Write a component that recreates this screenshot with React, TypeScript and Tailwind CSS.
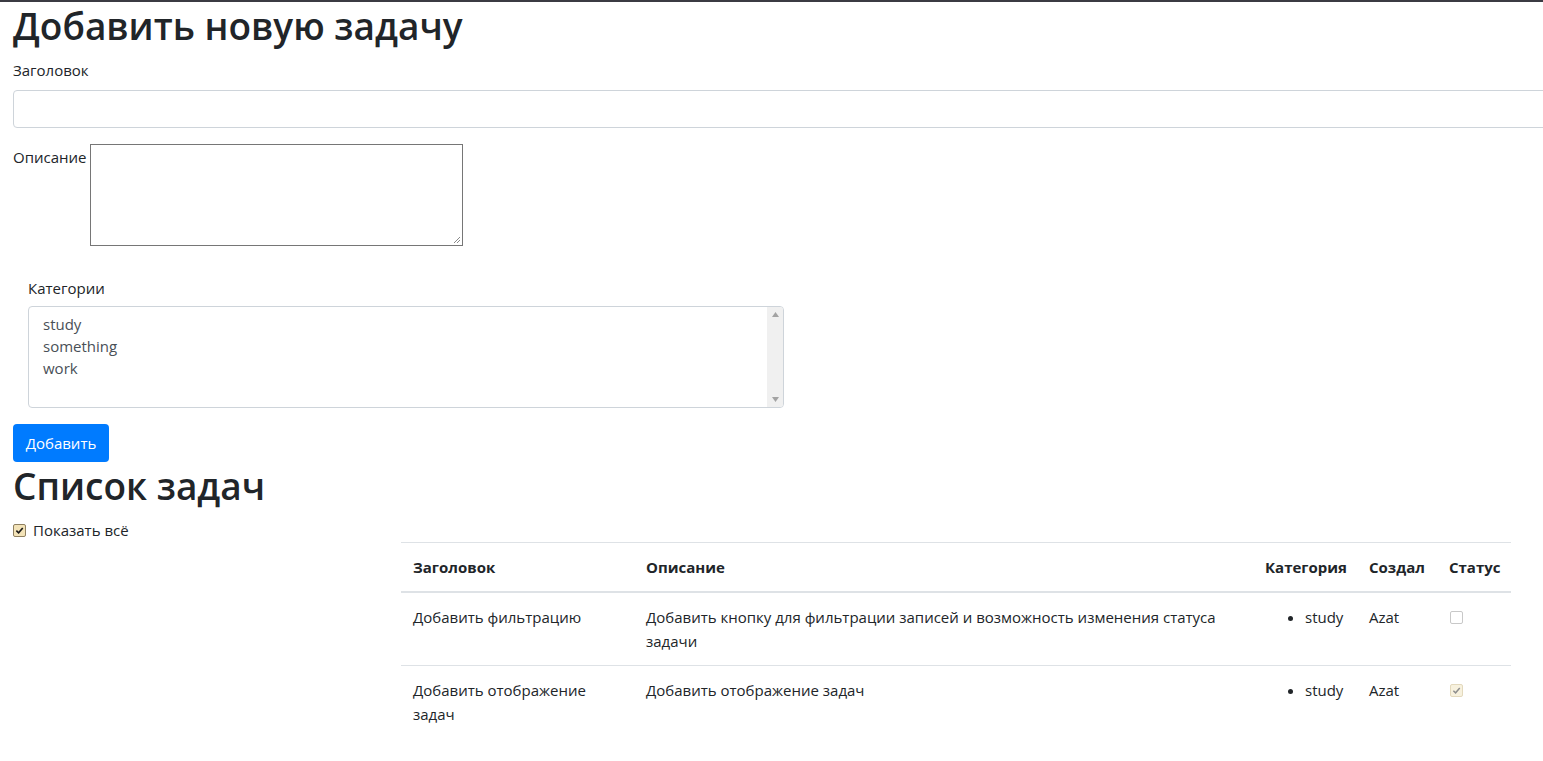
import React from "react";

const font = { fontFamily: '"Open Sans", "Noto Sans", sans-serif' };

function Check({ checked, disabled }: { checked: boolean; disabled?: boolean }) {
  if (disabled) {
    return (
      <span
        className={
          "inline-flex h-[13px] w-[13px] items-center justify-center rounded-[2px] border " +
          (checked ? "border-[#e3d9bd] bg-[#f7f1de]" : "border-[#c8c8c8] bg-white")
        }
      >
        {checked && (
          <svg width="9" height="9" viewBox="0 0 10 10">
            <path d="M1.5 5.2 L4 7.6 L8.6 2.2" fill="none" stroke="#8e8e8e" strokeWidth="1.6" />
          </svg>
        )}
      </span>
    );
  }
  return (
    <span className="inline-flex h-[13px] w-[13px] items-center justify-center rounded-[2px] border border-[#8f8060] bg-[#f3e3b8]">
      {checked && (
        <svg width="9" height="9" viewBox="0 0 10 10">
          <path d="M1.5 5.2 L4 7.6 L8.6 2.2" fill="none" stroke="#1a1a1a" strokeWidth="1.8" />
        </svg>
      )}
    </span>
  );
}

const rows = [
  {
    title: "Добавить фильтрацию",
    desc: "Добавить кнопку для фильтрации записей и возможность изменения статуса задачи",
    cat: "study",
    author: "Azat",
    done: false,
  },
  {
    title: "Добавить отображение задач",
    desc: "Добавить отображение задач",
    cat: "study",
    author: "Azat",
    done: true,
  },
];

export default function App() {
  return (
    <div style={font} className="min-h-[761px] w-[1543px] overflow-hidden bg-white text-[15px] leading-[24px] text-[#212529]">
      <div className="h-[2px] w-full bg-[#3b3b43]" />
      <div className="pl-[13px]">
        <h1 className="mb-[8px] h-[48px] text-[37px] font-semibold leading-[48px]">Добавить новую задачу</h1>
        <div className="mb-[16px]">
          <label className="mb-[8px] block">Заголовок</label>
          <div className="h-[38px] w-[1560px] rounded-[4px] border border-[#ced4da] bg-white" />
        </div>
        <div className="flex items-start">
          <span className="mr-[4px] mt-[1px]">Описание</span>
          <div className="relative h-[102px] w-[373px] border border-[#767676] bg-white">
            <svg className="absolute bottom-[1px] right-[1px]" width="8" height="8" viewBox="0 0 8 8">
              <path d="M7 1 L1 7 M7 4 L4 7" stroke="#8a8a8a" strokeWidth="1" />
            </svg>
          </div>
        </div>
        <div className="ml-[15px] mt-[30px] w-[756px]">
          <label className="mb-[6px] block">Категории</label>
          <div className="flex h-[102px] w-[756px] overflow-hidden rounded-[4px] border border-[#ced4da] bg-white">
            <div className="flex-1 px-[14px] pt-[6px] text-[15px] leading-[22px] text-[#495057]">
              <div>study</div>
              <div>something</div>
              <div>work</div>
            </div>
            <div className="flex w-[16px] flex-col items-center justify-between bg-[#f0f0f0] py-[5px]">
              <svg width="7" height="5" viewBox="0 0 7 5"><path d="M3.5 0 L7 5 L0 5 Z" fill="#a3a3a3" /></svg>
              <svg width="7" height="5" viewBox="0 0 7 5"><path d="M0 0 L7 0 L3.5 5 Z" fill="#a3a3a3" /></svg>
            </div>
          </div>
        </div>
        <button className="mt-[16px] flex h-[38px] w-[96px] items-center justify-center rounded-[4px] bg-[#007bff] text-[15px] text-white">
          Добавить
        </button>
        <h1 className="mb-[8px] h-[48px] text-[37px] font-semibold leading-[48px]">Список задач</h1>
        <div className="flex h-[24px] items-center">
          <Check checked />
          <span className="ml-[7px]">Показать всё</span>
        </div>
      </div>
      <table className="ml-[401px] w-[1110px] table-fixed border-collapse">
        <colgroup>
          <col className="w-[233px]" />
          <col className="w-[619px]" />
          <col className="w-[104px]" />
          <col className="w-[80px]" />
          <col className="w-[74px]" />
        </colgroup>
        <thead>
          <tr className="border-t border-b-2 border-[#dee2e6]">
            <th className="p-[12px] text-left font-bold">Заголовок</th>
            <th className="p-[12px] text-left font-bold">Описание</th>
            <th className="p-[12px] text-left font-bold">Категория</th>
            <th className="p-[12px] text-left font-bold">Создал</th>
            <th className="p-[12px] text-left font-bold">Статус</th>
          </tr>
        </thead>
        <tbody>
          {rows.map((r, i) => (
            <tr key={i} className="border-t border-[#dee2e6] align-top">
              <td className="p-[12px]">{r.title}</td>
              <td className="p-[12px]">{r.desc}</td>
              <td className="p-[12px]">
                <ul className="mb-[16px] list-disc pl-[40px]">
                  <li>{r.cat}</li>
                </ul>
              </td>
              <td className="p-[12px]">{r.author}</td>
              <td className="p-[12px]">
                <div className="ml-[1px] mt-[6px] flex">
                  <Check checked={r.done} disabled />
                </div>
              </td>
            </tr>
          ))}
        </tbody>
      </table>
    </div>
  );
}
